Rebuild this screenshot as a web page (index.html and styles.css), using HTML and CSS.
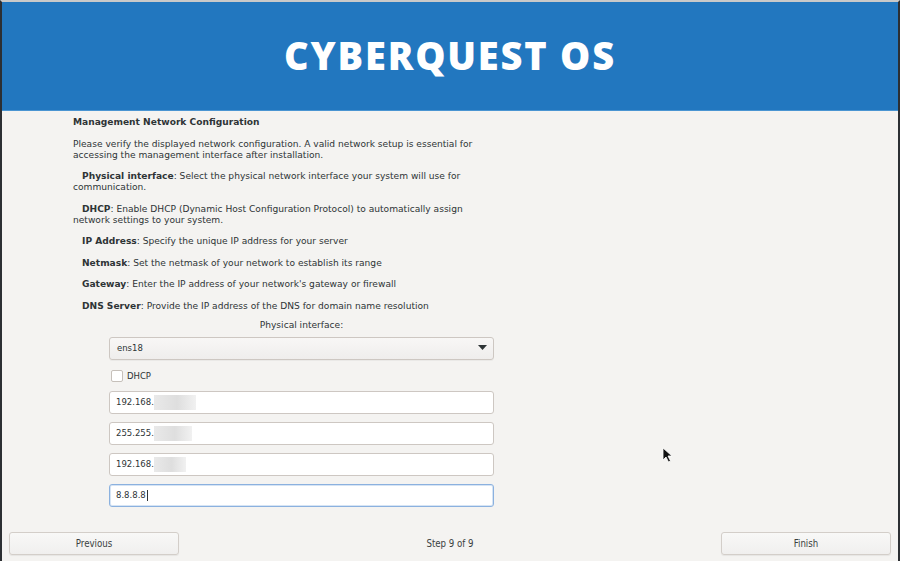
FILE: index.html
```html
<!DOCTYPE html>
<html>
<head>
<meta charset="utf-8">
<link rel="stylesheet" href="styles.css">
</head>
<body>
<div class="screen">
  <header class="banner">
    <h1 class="brand">CYBERQUEST OS</h1>
  </header>
  <main class="content">
    <p class="heading">Management Network Configuration</p>
    <p class="para">Please verify the displayed network configuration. A valid network setup is essential for<br>accessing the management interface after installation.</p>
    <p class="para"><span class="ind"><b>Physical interface</b>: Select the physical network interface your system will use for</span><br>communication.</p>
    <p class="para"><span class="ind"><b>DHCP</b>: Enable DHCP (Dynamic Host Configuration Protocol) to automatically assign</span><br>network settings to your system.</p>
    <p class="para"><span class="ind"><b>IP Address</b>: Specify the unique IP address for your server</span></p>
    <p class="para"><span class="ind"><b>Netmask</b>: Set the netmask of your network to establish its range</span></p>
    <p class="para"><span class="ind"><b>Gateway</b>: Enter the IP address of your network's gateway or firewall</span></p>
    <p class="para last"><span class="ind"><b>DNS Server</b>: Provide the IP address of the DNS for domain name resolution</span></p>

    <div class="form">
      <div class="form-label">Physical interface:</div>
      <div class="combo">
        <span>ens18</span>
        <svg class="arrow" width="9" height="5" viewBox="0 0 9 5"><path d="M0 0H9L4.5 5Z" fill="#2e3436"/></svg>
      </div>
      <label class="check"><span class="box"></span><span>DHCP</span></label>
      <div class="entry"><span>192.168.</span><span class="blur w1"></span></div>
      <div class="entry"><span>255.255.</span><span class="blur w2"></span></div>
      <div class="entry"><span>192.168.</span><span class="blur w3"></span></div>
      <div class="entry focus"><span>8.8.8.8</span><span class="caret"></span></div>
    </div>
  </main>
  <footer class="footer">
    <button class="btn">Previous</button>
    <span class="step">Step 9 of 9</span>
    <button class="btn">Finish</button>
  </footer>
  <svg class="pointer" width="12" height="16" viewBox="0 0 12 16"><path d="M1 1V13L4 10L6.5 15L8.5 14L6 9H10Z" fill="#111" stroke="#fff" stroke-width="0.8"/></svg>
</div>
</body>
</html>
```
FILE: styles.css
```css
html, body {
  margin: 0;
  padding: 0;
}
body {
  width: 900px;
  height: 561px;
  overflow: hidden;
  background: #f4f3f1;
}
.screen {
  position: relative;
  box-sizing: border-box;
  width: 900px;
  height: 561px;
  border-top: 2px solid #c9c9c9;
  border-left: 2px solid #2c2f33;
  border-right: 2px solid #2c2f33;
  display: flex;
  flex-direction: column;
  background: #f4f3f1;
  font-family: "DejaVu Sans", sans-serif;
  color: #2e3436;
}
.banner {
  flex: none;
  height: 108px;
  background: #2277bf;
  border-bottom: 1px solid #4a95d2;
  display: flex;
  align-items: center;
  justify-content: center;
}
.brand {
  margin: 0;
  padding-bottom: 2px;
  font-family: "Open Sans", sans-serif;
  font-weight: 800;
  font-size: 38px;
  letter-spacing: 1.8px;
  color: #ffffff;
}
.content {
  flex: 1;
  min-height: 0;
  padding: 6px 0 0 71px;
  font-size: 9.1px;
  line-height: 11px;
}
.content p {
  margin: 0 0 10.5px 0;
  white-space: nowrap;
}
.content p.heading {
  font-weight: bold;
  margin-bottom: 10.5px;
}
.ind {
  padding-left: 9px;
}
.content p.last {
  margin-bottom: 8px;
}
.form {
  width: 385px;
  margin-left: 36px;
  display: flex;
  flex-direction: column;
}
.form-label {
  text-align: center;
  margin-bottom: 6px;
}
.combo {
  box-sizing: border-box;
  height: 23px;
  border: 1px solid #cdc7c2;
  border-radius: 3px;
  background: linear-gradient(#f8f7f6, #efedec);
  display: flex;
  align-items: center;
  justify-content: space-between;
  padding: 0 6px 0 7px;
  font-size: 8.5px;
  box-shadow: 0 1px 0 rgba(0,0,0,0.04);
}
.arrow {
  margin-bottom: 1px;
}
.check {
  display: flex;
  align-items: center;
  gap: 4px;
  height: 11px;
  margin: 11px 0 9px 2px;
  font-size: 8.5px;
}
.box {
  box-sizing: border-box;
  width: 12px;
  height: 12px;
  border: 1px solid #c6c0ba;
  border-radius: 2px;
  background: #fff;
}
.entry {
  box-sizing: border-box;
  height: 23px;
  margin-bottom: 8px;
  border: 1px solid #cdc7c2;
  border-radius: 3px;
  background: #fff;
  display: flex;
  align-items: center;
  padding-left: 6px;
  font-size: 8.5px;
  color: #2e3436;
}
.entry.focus {
  border-color: #8bb1df;
  box-shadow: inset 0 0 0 1px #d6e4f4;
}
.blur {
  height: 15px;
  background: linear-gradient(90deg, #e9e9e9 0%, #dedede 55%, #f1f1f1 100%);
  filter: blur(0.6px);
}
.w1 { width: 42px; }
.w2 { width: 38px; }
.w3 { width: 32px; }
.caret {
  width: 1px;
  height: 11px;
  background: #2e3436;
  margin-left: 1px;
}
.footer {
  flex: none;
  box-sizing: border-box;
  height: 30px;
  padding: 1px 7px 0 7px;
  display: flex;
  align-items: flex-start;
  justify-content: space-between;
}
.btn {
  box-sizing: border-box;
  width: 170px;
  height: 23px;
  border: 1px solid #d3cec9;
  border-radius: 3px;
  background: linear-gradient(#f8f8f7, #f0efee);
  box-shadow: 0 1px 1px rgba(0,0,0,0.06);
  font-family: "DejaVu Sans Condensed", "DejaVu Sans", sans-serif;
  font-size: 9.6px;
  color: #3a3f41;
  padding: 0;
}
.step {
  font-family: "DejaVu Sans Condensed", "DejaVu Sans", sans-serif;
  font-size: 9.6px;
  line-height: 23px;
  color: #3a3f41;
}
.pointer {
  position: absolute;
  left: 660px;
  top: 445px;
}
```
